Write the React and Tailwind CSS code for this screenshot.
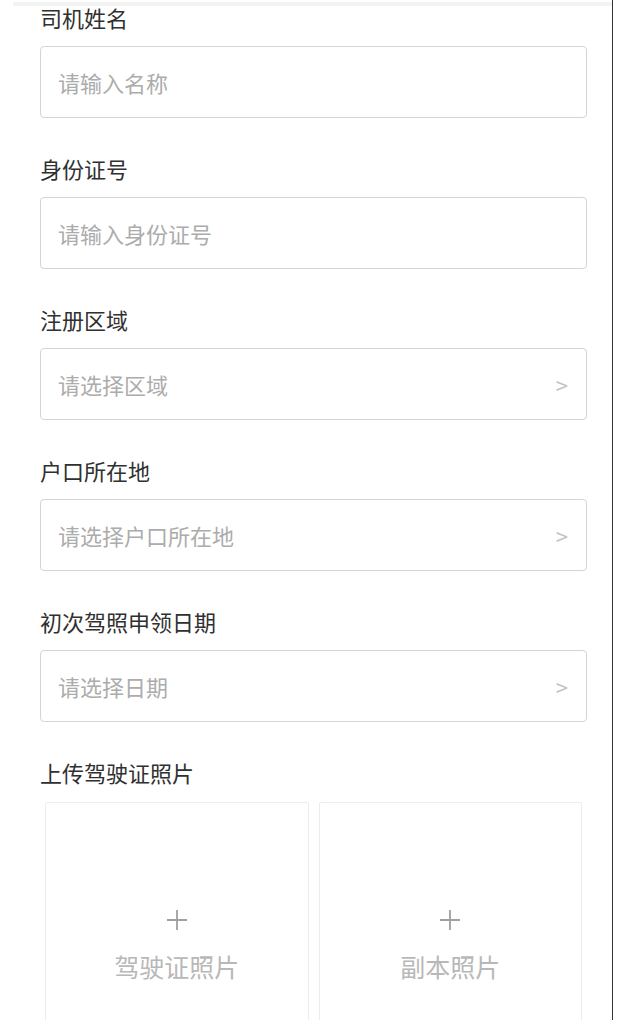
import React from "react";

const fields = [
  { label: "司机姓名", placeholder: "请输入名称" },
  { label: "身份证号", placeholder: "请输入身份证号" },
  { label: "注册区域", placeholder: "请选择区域", select: true },
  { label: "户口所在地", placeholder: "请选择户口所在地", select: true },
  { label: "初次驾照申领日期", placeholder: "请选择日期", select: true },
];

function Field({ label, placeholder, select }) {
  return (
    <div className="mb-[39px]">
      <div className="h-[22px] text-[22px] leading-[22px] text-[#303030]">{label}</div>
      <div className="mt-[18px] h-[72px] rounded-[4px] border border-[#d4d4d4] flex items-center pl-[17px] pr-[18px]">
        <span className="flex-1 text-[22px] text-[#acacac]">{placeholder}</span>
        {select && <span className="text-[22px] text-[#c4c4c4]">&gt;</span>}
      </div>
    </div>
  );
}

function UploadBox({ text }) {
  return (
    <div className="flex-1 h-[270px] border border-[#ececec] rounded-[2px] flex flex-col items-center pt-[106px]">
      <svg width="22" height="22" viewBox="0 0 22 22">
        <path d="M11 1v20M1 11h20" stroke="#a0a0a0" strokeWidth="1.8" />
      </svg>
      <div className="mt-[20px] text-[25px] leading-[30px] text-[#b8b8b8]">{text}</div>
    </div>
  );
}

export default function App() {
  return (
    <div
      className="h-[1020px] overflow-hidden bg-white"
      style={{ fontFamily: '"Noto Sans CJK SC", "Noto Sans", sans-serif' }}
    >
      <div className="relative w-[613px] h-full border-r-[1.5px] border-[#333]">
        {/* 顶部栏阴影 */}
        <div className="absolute top-[2px] left-[13px] right-0 h-[4px] bg-[#f3f3f3]" />
        <div className="pt-[6px] pl-[40px] pr-[25px]">
          {fields.map((f) => (
            <Field key={f.label} {...f} />
          ))}
          <div className="h-[22px] text-[22px] leading-[22px] text-[#303030]">上传驾驶证照片</div>
          <div className="mt-[19px] px-[5px] flex gap-[10px]">
            <UploadBox text="驾驶证照片" />
            <UploadBox text="副本照片" />
          </div>
        </div>
      </div>
    </div>
  );
}
